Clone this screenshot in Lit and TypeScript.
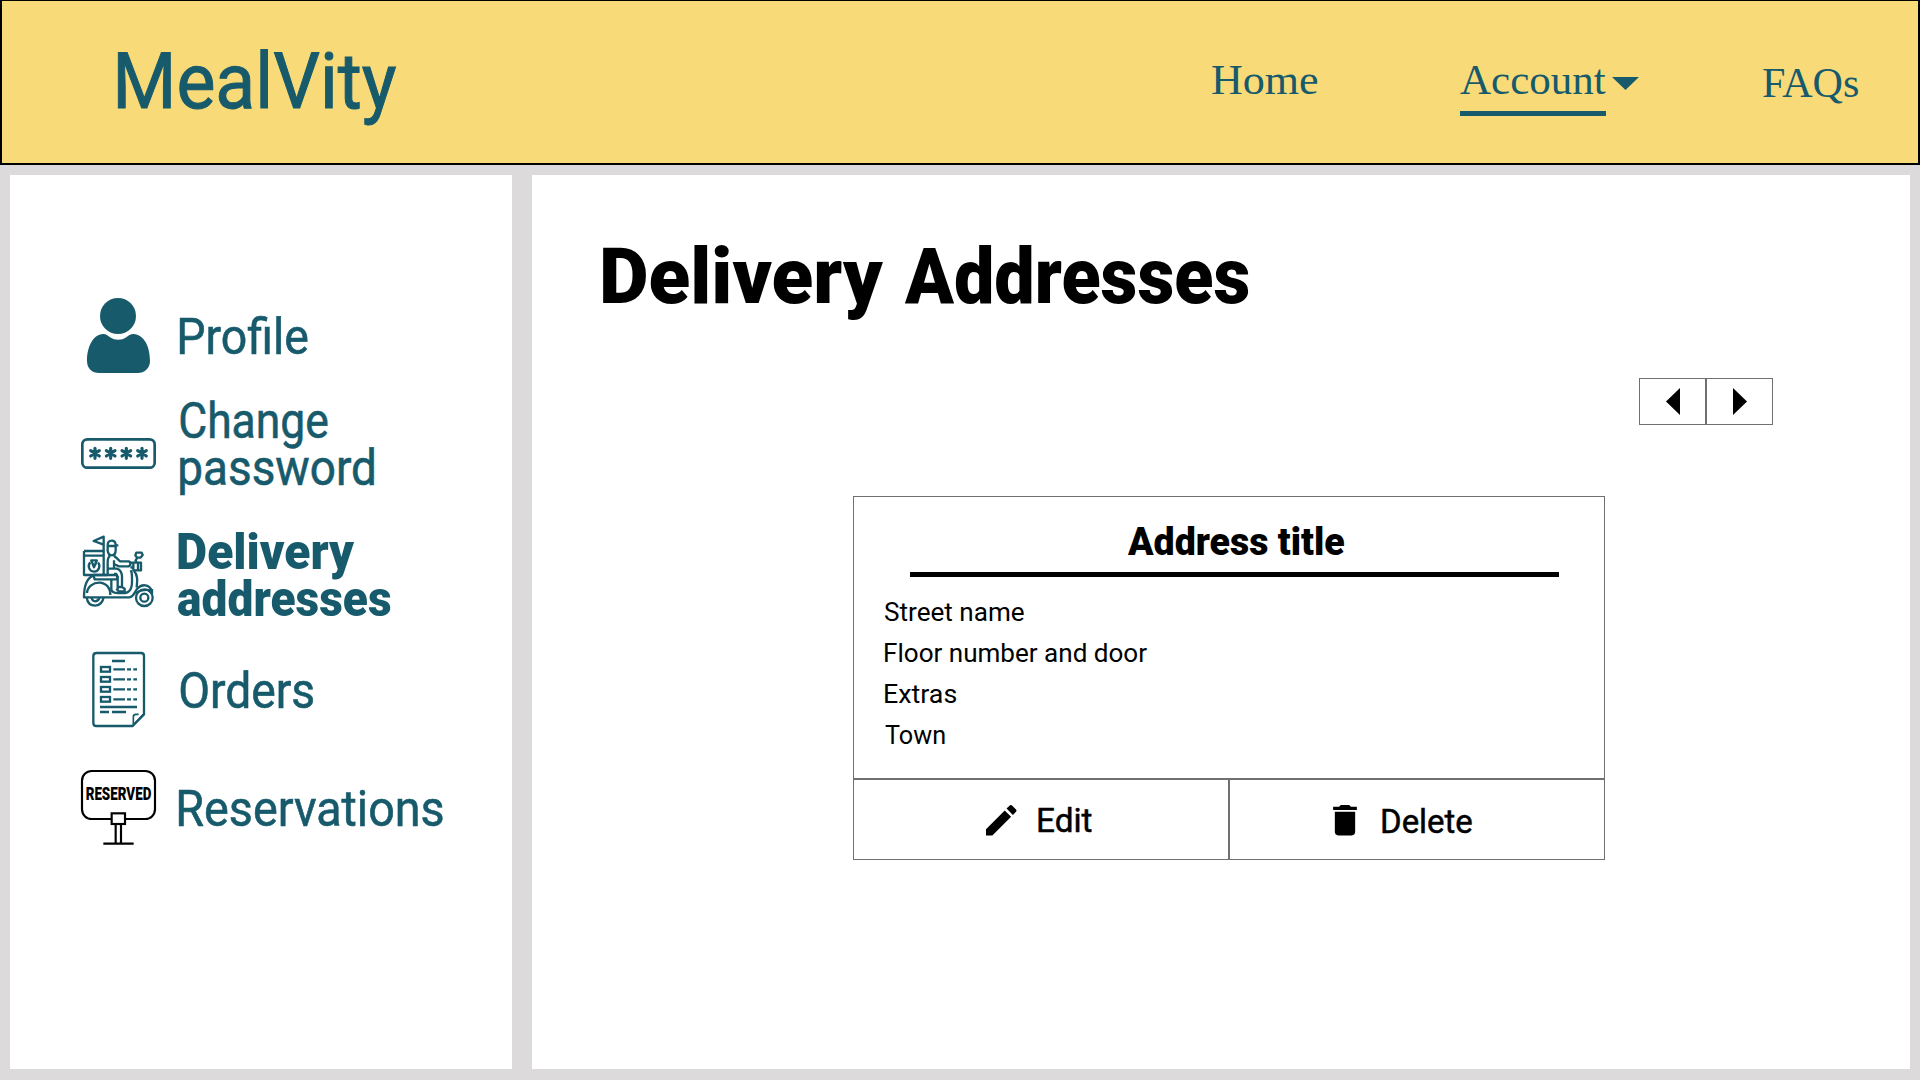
import { LitElement, html, css, svg } from "lit";
import { customElement, property, query } from "lit/decorators.js";

/** A single line of text whose ink is fitted to a given width. */
@customElement("fit-text")
class FitText extends LitElement {
  @property() text = "";
  @property({ type: Number }) width = 100;
  @query("span") span!: HTMLSpanElement;

  static styles = css`
    :host { display: block; flex: none; }
    span { display: inline-block; white-space: nowrap; transform-origin: 0 0; vertical-align: top; }
  `;

  render() {
    return html`<span>${this.text}</span>`;
  }

  updated() {
    const cs = getComputedStyle(this);
    const ctx = document.createElement("canvas").getContext("2d")!;
    ctx.font = `${cs.fontWeight} ${cs.fontSize} ${cs.fontFamily}`;
    const m = ctx.measureText(this.text);
    const ink = m.actualBoundingBoxLeft + m.actualBoundingBoxRight;
    const k = this.width / ink;
    this.style.width = `${this.width}px`;
    this.span.style.transform = `translateX(${m.actualBoundingBoxLeft * k}px) scaleX(${k})`;
  }
}

const star = (x: number) => svg`<g transform="translate(${x} 520)">
  <path d="M0-15V15M-13-8L13 8M-13 8L13-8"/></g>`;

const profileIcon = html`<svg class="icon" viewBox="33 54 225 225" fill="#175a6b">
  <circle cx="144" cy="108" r="54"/>
  <path d="M100 162C108 162 113 167 120 172C135 182 155 182 169 172C176 167 181 162 190 162C223 164 240 200 240 243C240 265 223 279 203 279H88C66 279 51 265 51 243C51 203 67 164 100 162Z"/>
</svg>`;

const passwordIcon = html`<svg class="icon" viewBox="33 408 225 225" fill="none" stroke="#175a6b">
  <rect x="37" y="478" width="217" height="85" rx="15" stroke-width="8"/>
  <g stroke-width="9.5" stroke-linecap="round">${[75, 122, 169, 216].map(star)}</g>
</svg>`;

const scooterIcon = html`<svg class="icon" viewBox="33 45 225 225" fill="none" stroke="#175a6b" stroke-width="7" stroke-linejoin="round">
  <path d="M101 165V50L71 63L101 74"/>
  <path d="M42 93H101M42 107H101M42 93V165H113"/>
  <path d="M61 127C52 136 56 154 72 155C88 154 92 136 84 128"/>
  <path d="M63 120L70 136M81 120L75 136M64 121H80L72 142Z"/>
  <path d="M113 78C112 66 118 62 125 62C133 62 137 68 137 76H145M113 78H138M113 78V92C114 101 119 106 126 106C133 105 137 100 137 90V78"/>
  <path d="M118 103V110C113 113 113 120 113 128V163M133 103L134 110C142 113 145 121 150 124H177L181 128V135L176 139H147L132 132M132 121V145"/>
  <path d="M178 128H190M181 142H190M190 128H213V151H190ZM204 128V151M200 128L196 119M193 151L187 143"/>
  <path d="M199 98H215L218 105L212 113H201L196 106ZM202 113L197 121"/>
  <path d="M113 146H140C151 149 155 158 156 168V201L164 206V214H146L139 206M132 162H139L143 170V208M146 201H158"/>
  <path d="M70 165H137C142 167 143 173 141 178H74ZM67 168C49 177 42 199 42 232H178C192 231 193 216 203 205C216 191 237 193 245 211C224 208 209 210 199 221"/>
  <path d="M51 219C52 200 70 187 90 188C111 190 122 207 121 225"/>
  <path d="M124 179V207C124 216 130 219 143 219H165C187 216 188 192 185 158L182 151M192 152C204 166 202 181 200 203"/>
  <path d="M50 232C52 248 62 257 76 257C90 256 98 248 101 232M64 232C66 240 70 244 76 244C83 243 87 240 88 232"/>
  <circle cx="223" cy="233" r="25"/><circle cx="223" cy="233" r="12"/>
  <path d="M237 211L246 220V207"/>
</svg>`;

const ordersIcon = html`<svg class="icon" viewBox="33 36 225 225" fill="none" stroke="#175a6b" stroke-width="7">
  <path d="M80 39H213Q222 39 222 48V223L188 258H79Q70 258 70 248V48Q70 39 80 39Z" stroke-linejoin="round"/>
  <path d="M190 256V230Q190 223 198 223H206M220 223L190 255" stroke-width="5"/>
  <path d="M126 63H165M90 201H201M90 216H117M126 216H168"/>
  ${[88, 118, 148, 178].map((y) => svg`<rect x="93" y="${y - 7}" width="27" height="14"/>
    <path d="M130 ${y}H165M171 ${y}H183M190 ${y}H201"/>`)}
</svg>`;

const reservedIcon = html`<svg class="icon" viewBox="33 30 225 225" fill="none" stroke="#000" stroke-width="6.5">
  <rect x="36" y="33" width="219" height="144" rx="29"/>
  <rect x="125" y="160" width="40" height="32" fill="#fff"/>
  <path d="M137 194V250M153 194V250M100 251H191"/>
  <text class="plate" x="47" y="120" textLength="197" lengthAdjust="spacingAndGlyphs">RESERVED</text>
</svg>`;

const menu = [
  { cls: "profile", icon: profileIcon, lines: [["Profile", 127.5]] },
  { cls: "password", icon: passwordIcon, lines: [["Change", 147.5], ["password", 194]] },
  { cls: "delivery", icon: scooterIcon, lines: [["Delivery", 177], ["addresses", 213]] },
  { cls: "orders", icon: ordersIcon, lines: [["Orders", 133.5]] },
  { cls: "reservations", icon: reservedIcon, lines: [["Reservations", 264]] },
] as const;

const details = [
  ["Street name", 139.5],
  ["Floor number and door", 262],
  ["Extras", 71.5],
  ["Town", 59.5],
] as const;

@customElement("app-root")
class AppRoot extends LitElement {
  static styles = css`
    :host {
      display: flex; flex-direction: column; box-sizing: border-box;
      width: 1920px; height: 1080px; overflow: hidden;
      background: #dcdadb; font-family: Roboto, "Noto Sans", sans-serif; color: #000;
    }
    * { box-sizing: border-box; }
    svg { display: block; flex: none; overflow: visible; }
    header {
      display: flex; align-items: flex-start; flex: none; height: 165px;
      border: 2px solid #000; border-top-width: 1px;
      background: #f8da78; color: #175a6b; padding: 0 60px 0 116px;
    }
    .logo { font-size: 77.4px; line-height: 90px; margin-top: 35.5px; -webkit-text-stroke: 1px currentColor; }
    nav {
      display: flex; align-items: flex-start; margin-left: auto; padding-top: 53.8px;
      font-family: "Liberation Serif", serif; font-size: 42px; line-height: 50px;
    }
    .account { display: flex; margin: 0 124.5px 0 141.5px; }
    .current { height: 61.2px; border-bottom: 5px solid #175a6b; }
    .caret { margin: 22px 0 0 6px; }
    .faqs { padding-top: 3px; }
    main { display: flex; flex: 1; gap: 20px; padding: 10px 10px 11px; }
    aside { width: 502px; background: #fff; padding: 123px 0 0 71px; }
    .item { display: flex; align-items: flex-start; gap: 24px; color: #175a6b; font-size: 50px; line-height: 47px; -webkit-text-stroke: 0.6px currentColor; }
    .icon { width: 75px; height: 75px; }
    .label { padding-top: 16.4px; margin-left: -0.5px; }
    .password { margin-top: 25.4px; }
    .password .label, .delivery .label { padding-top: 0; }
    .password .icon { margin-top: 17.6px; }
    .delivery { margin-top: 37px; font-weight: 900; -webkit-text-stroke: 0; }
    .delivery .icon { margin-top: 5.6px; }
    .delivery .label { margin-left: -2px; }
    .orders { margin-top: 28.6px; }
    .reservations { margin-top: 43px; }
    .reservations .label { margin-left: -1.5px; }
    .plate { font: 900 53px Roboto, sans-serif; fill: #000; stroke: none; }
    section { flex: 1; background: #fff; display: flex; flex-direction: column; }
    .title { display: flex; gap: 20.7px; font-size: 77.4px; font-weight: 900; line-height: 90px; margin: 56.5px 0 0 70.7px; }
    .pager { display: flex; align-self: flex-end; margin: 56.5px 137px 0 0; height: 47px; }
    .pager div { width: 67px; border: 1px solid #707070; padding: 9px 0 0 26px; }
    .card { width: 752px; margin: 71px 0 0 321px; }
    .body { height: 283px; border: 1px solid #707070; padding-top: 20.5px; }
    .name { font-size: 39px; font-weight: 900; line-height: 48px; margin-left: 272.5px; }
    .rule { width: 649px; height: 5px; background: #000; margin: 6.5px 0 14px 56px; }
    .line { font-size: 26.6px; line-height: 41px; margin-left: 31px; }
    .actions { display: flex; }
    .action { width: 376px; height: 81px; border: 1px solid #707070; display: flex; align-items: flex-start; font-size: 33.5px; line-height: 40px; }
    .action fit-text { -webkit-text-stroke: 0.5px currentColor; }
    .edit { padding: 20.8px 0 0 132px; gap: 21.5px; }
    .delete { padding: 21.8px 0 0 103px; gap: 24.5px; }
    .action svg { margin-top: 4px; }
    .delete svg { margin-top: 3px; }
  `;

  render() {
    return html`
      <header>
        <fit-text class="logo" text="MealVity" width="278"></fit-text>
        <nav>
          <fit-text text="Home" width="106"></fit-text>
          <div class="account">
            <div class="current"><fit-text text="Account" width="146"></fit-text></div>
            <svg class="caret" width="27" height="13" viewBox="0 0 27 13"><path d="M0 0H27L13.5 13Z" fill="#175a6b"/></svg>
          </div>
          <fit-text class="faqs" text="FAQs" width="95"></fit-text>
        </nav>
      </header>
      <main>
        <aside>
          ${menu.map((m) => html`<div class="item ${m.cls}">
            ${m.icon}
            <div class="label">${m.lines.map(([t, w]) => html`<fit-text .text=${t} .width=${w}></fit-text>`)}</div>
          </div>`)}
        </aside>
        <section>
          <div class="title">
            <fit-text text="Delivery" width="280.5"></fit-text>
            <fit-text text="Addresses" width="344.8"></fit-text>
          </div>
          <div class="pager">
            <div><svg width="14" height="27" viewBox="0 0 14 27"><path d="M14 0V27L0 13.5Z"/></svg></div>
            <div><svg width="14" height="27" viewBox="0 0 14 27"><path d="M0 0V27L14 13.5Z"/></svg></div>
          </div>
          <div class="card">
            <div class="body">
              <fit-text class="name" text="Address title" width="217.5"></fit-text>
              <div class="rule"></div>
              ${details.map(([t, w]) => html`<fit-text class="line" .text=${t} .width=${w}></fit-text>`)}
            </div>
            <div class="actions">
              <div class="action edit">
                <svg width="30.5" height="30.5" viewBox="3 3 18 18"><path d="M3 17.25V21h3.75L17.81 9.94l-3.75-3.75L3 17.25zM20.71 7.04a1 1 0 0 0 0-1.41l-2.34-2.34a1 1 0 0 0-1.41 0l-1.83 1.83 3.75 3.75 1.83-1.83z"/></svg>
                <fit-text text="Edit" width="53.5"></fit-text>
              </div>
              <div class="action delete">
                <svg width="24" height="30.5" viewBox="5 3 14 18"><path d="M6 19c0 1.1.9 2 2 2h8c1.100 0 2-.9 2-2V7H6v12zM19 4h-3.500l-1-1h-5l-1 1H5v2h14V4z"/></svg>
                <fit-text text="Delete" width="90"></fit-text>
              </div>
            </div>
          </div>
        </section>
      </main>
    `;
  }
}
